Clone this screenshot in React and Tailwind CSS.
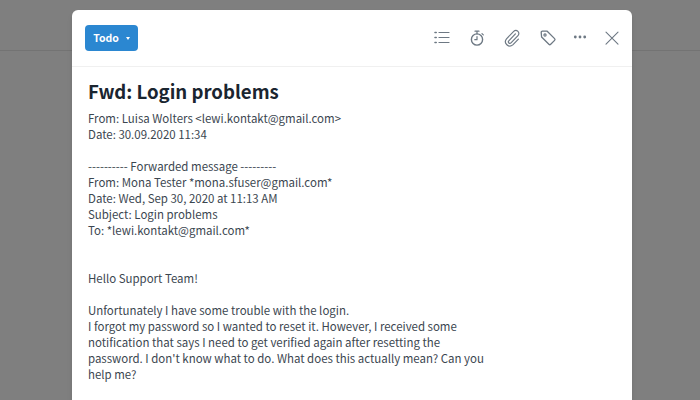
const BODY = [
  "From: Luisa Wolters <lewi.kontakt@gmail.com>",
  "Date: 30.09.2020 11:34",
  "",
  "---------- Forwarded message ---------",
  "From: Mona Tester *mona.sfuser@gmail.com*",
  "Date: Wed, Sep 30, 2020 at 11:13 AM",
  "Subject: Login problems",
  "To: *lewi.kontakt@gmail.com*",
  "",
  "",
  "Hello Support Team!",
  "",
  "Unfortunately I have some trouble with the login.",
  "I forgot my password so I wanted to reset it. However, I received some",
  "notification that says I need to get verified again after resetting the",
  "password. I don't know what to do. What does this actually mean? Can you",
  "help me?",
];

// toolbar icons drawn on an 18px box
function Icon({ children }) {
  return (
    <svg width="18" height="18" viewBox="0 0 18 18" fill="none" stroke="#6d7883" strokeWidth="1.2" strokeLinecap="round" strokeLinejoin="round">
      {children}
    </svg>
  );
}

const ListIcon = () => (
  <Icon>
    <path d="M6 3.5h10M6 8.5h10M6 13.5h10" />
    <path d="M2 3.5h1.2M2 8.5h1.2M2 13.5h1.2" strokeWidth="1.6" />
  </Icon>
);

const TimerIcon = () => (
  <Icon>
    <circle cx="9" cy="10.5" r="5.6" strokeWidth="1.4" />
    <path d="M7 2.2h4M9 2.2v2.6M14 4.6l1.3 1.3M9 7.5v3.2H6.8" />
  </Icon>
);

const ClipIcon = () => (
  <Icon>
    <path d="M12.4 4.9l-6.6 6.9a1.5 1.5 0 0 0 2.2 2.1l7-7.3a3 3 0 0 0-4.3-4.2L3.5 9.8a4.4 4.4 0 0 0 6.3 6.1l5.6-5.8" />
  </Icon>
);

const TagIcon = () => (
  <Icon>
    <path d="M2.2 3.4a1.2 1.2 0 0 1 1.2-1.2h4.8l7.4 7.4a1.3 1.3 0 0 1 0 1.8l-3.9 3.9a1.3 1.3 0 0 1-1.8 0L2.6 8z" strokeWidth="1.3" />
    <circle cx="6" cy="6" r="1.1" />
  </Icon>
);

const DotsIcon = () => (
  <Icon>
    <circle cx="4.3" cy="8" r="1.4" fill="#6d7883" stroke="none" />
    <circle cx="9" cy="8" r="1.4" fill="#6d7883" stroke="none" />
    <circle cx="13.7" cy="8" r="1.4" fill="#6d7883" stroke="none" />
  </Icon>
);

const CloseIcon = () => (
  <Icon>
    <path d="M3 3.2l12 12M15 3.2l-12 12" strokeWidth="1.1" />
  </Icon>
);

export default function App() {
  return (
    <div className="relative h-[400px] w-[700px] overflow-hidden bg-[#7f7f7f] font-['Noto_Sans_CJK_SC',sans-serif]">
      <div className="h-[51px] border-b border-[#737373]" />
      <div className="absolute left-[72px] top-[10px] h-[420px] w-[560px] rounded-md bg-white shadow-md">
        <div className="flex h-[57px] items-center justify-between border-b border-[#f0f0f0] pl-[13px] pr-[11px]">
          <button className="flex h-[26px] w-[53px] items-center justify-center gap-[7px] rounded bg-[#2b87d1] text-[10.5px] font-bold text-white">
            Todo
            <span className="mt-[1px] h-0 w-0 border-x-[2.5px] border-t-[3px] border-x-transparent border-t-white" />
          </button>
          <div className="mt-[-1px] flex items-center gap-[14px]">
            <ListIcon />
            <div className="ml-[3px]"><TimerIcon /></div>
            <div className="ml-[3px]"><ClipIcon /></div>
            <div className="ml-[4px]"><TagIcon /></div>
            <DotsIcon />
            <CloseIcon />
          </div>
        </div>
        <div className="pl-[16px] pt-[11px]">
          <h1 className="text-[18.6px] font-bold leading-[26px] text-[#1a2530]">Fwd: Login problems</h1>
          <div className="mt-[6px] text-[11.46px] leading-[16px] text-[#3b4650]">
            {BODY.map((line, i) => (
              <div key={i} className="h-[16px] whitespace-pre">{line}</div>
            ))}
          </div>
        </div>
      </div>
    </div>
  );
}
